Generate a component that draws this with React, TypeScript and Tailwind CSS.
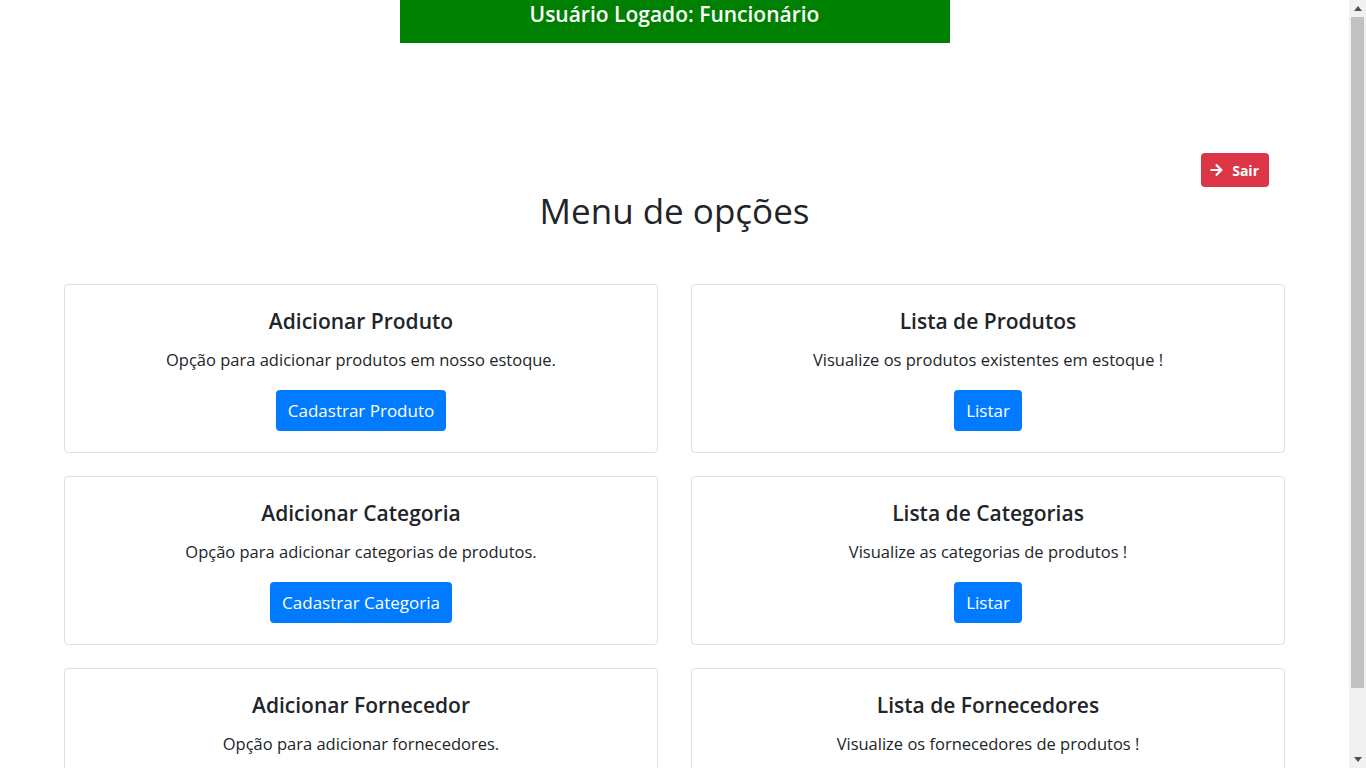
import { FaArrowRight } from "react-icons/fa";

interface OptionCardProps {
  title: string;
  text: string;
  button: string;
}

function OptionCard({ title, text, button }: OptionCardProps) {
  return (
    <div className="flex flex-col items-center rounded border border-[#dfdfdf] bg-white px-5 pt-[22px] pb-[21px] text-center">
      <h5 className="h-[28px] text-[21px] leading-[28px] font-semibold text-[#212529]">{title}</h5>
      <p className="mt-[13px] h-[24px] text-[16.5px] leading-[24px] text-[#212529]">{text}</p>
      <button className="mt-[18px] h-[41px] rounded bg-[#007bff] px-[12px] text-[17px] leading-[41px] text-white hover:bg-[#0069d9]">
        {button}
      </button>
    </div>
  );
}

const options: OptionCardProps[] = [
  { title: "Adicionar Produto", text: "Opção para adicionar produtos em nosso estoque.", button: "Cadastrar Produto" },
  { title: "Lista de Produtos", text: "Visualize os produtos existentes em estoque !", button: "Listar" },
  { title: "Adicionar Categoria", text: "Opção para adicionar categorias de produtos.", button: "Cadastrar Categoria" },
  { title: "Lista de Categorias", text: "Visualize as categorias de produtos !", button: "Listar" },
  { title: "Adicionar Fornecedor", text: "Opção para adicionar fornecedores.", button: "Cadastrar Fornecedor" },
  { title: "Lista de Fornecedores", text: "Visualize os fornecedores de produtos !", button: "Listar" },
];

// browser scrollbar as seen in the screenshot
function Scrollbar() {
  return (
    <div className="flex h-screen w-[17px] shrink-0 flex-col bg-[#f1f1f1]">
      <div className="flex h-[17px] items-center justify-center">
        <svg width="8" height="5" viewBox="0 0 8 5">
          <path d="M4 0 L8 5 L0 5 Z" fill="#505050" />
        </svg>
      </div>
      <div className="flex-1 px-[2px]">
        <div className="h-[671px] bg-[#c1c1c1]" />
      </div>
      <div className="flex h-[17px] items-center justify-center">
        <svg width="8" height="5" viewBox="0 0 8 5">
          <path d="M0 0 L8 0 L4 5 Z" fill="#505050" />
        </svg>
      </div>
    </div>
  );
}

export default function App() {
  return (
    <div className="flex h-screen overflow-hidden bg-white font-['Open_Sans',sans-serif] text-[#212529]">
      <main className="min-w-0 flex-1 overflow-hidden">
        <div className="flex justify-center">
          <div className="h-[43px] w-[550px] bg-[#008000] text-center text-[21px] leading-[28px] font-semibold text-white">
            Usuário Logado: Funcionário
          </div>
        </div>

        <div className="mt-[110px] flex justify-end pr-[80px]">
          <button className="flex h-[34px] items-center gap-[9px] rounded bg-[#dc3545] pr-[10px] pl-[9px] text-[14px] font-bold text-white hover:bg-[#c82333]">
            <FaArrowRight className="h-[14px] w-[13px]" />
            Sair
          </button>
        </div>

        <h1 className="mt-[2px] text-center text-[35px] leading-[44px] font-medium">Menu de opções</h1>

        <div className="mt-[51px] grid grid-cols-2 gap-x-[33px] gap-y-[23px] px-16 pb-6">
          {options.map((o) => (
            <OptionCard key={o.title} {...o} />
          ))}
        </div>
      </main>
      <Scrollbar />
    </div>
  );
}
